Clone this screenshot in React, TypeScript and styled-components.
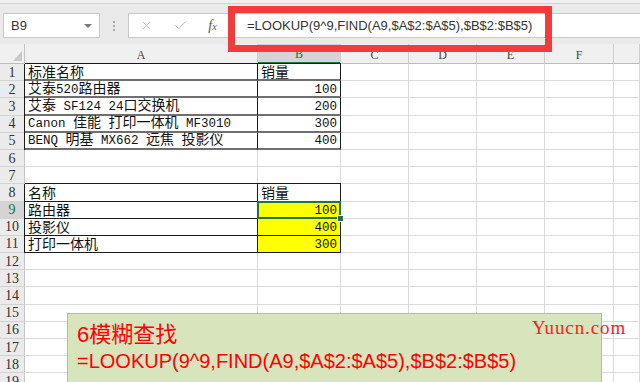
import React from 'react'
import styled, { createGlobalStyle } from 'styled-components'
import { X, Check } from 'lucide-react'

const COLS = '25px 233px 83px 68px 68px 68px 69px 1fr'
const ROW_H = 17.2
const GREEN = '#217346'

const GlobalStyle = createGlobalStyle`
	html, body {
		margin: 0;
		padding: 0;
		background: #fff;
		overflow: hidden;
	}
`

const Window = styled.div`
	position: relative;
	width: 640px;
	height: 382px;
	overflow: hidden;
	background: #f0f0f0;
`

const TopBar = styled.div`
	display: flex;
	align-items: center;
	height: 25px;
	margin-top: 3px;
	border-top: 1px solid #d4d4d4;
	padding: 9px 0 6px 3px;
	background: #eaeaea;
`

const NameBox = styled.div`
	box-sizing: border-box;
	display: flex;
	align-items: center;
	justify-content: space-between;
	width: 97px;
	height: 25px;
	padding: 0 7px 0 7px;
	background: #fff;
	border: 1px solid #c8c8c8;
	font: 13px 'Liberation Sans', sans-serif;
	color: #333;
`

const DropArrow = styled.span`
	width: 0;
	height: 0;
	border-left: 4px solid transparent;
	border-right: 4px solid transparent;
	border-top: 4px solid #7a7a7a;
`

const Grip = styled.div`
	width: 2px;
	height: 10px;
	margin: 0 13px;
	background: repeating-linear-gradient(to bottom, #aaa 0 2px, transparent 2px 4px);
`

const FormulaBox = styled.div`
	box-sizing: border-box;
	flex: 1;
	display: flex;
	align-items: center;
	height: 25px;
	background: #fff;
	border: 1px solid #c8c8c8;
	border-right: none;
`

const Actions = styled.div`
	display: grid;
	grid-template-columns: 34px 34px 31px;
	place-items: center;
	width: 99px;
	color: #b5b5b5;
`

const Fx = styled.span`
	font: italic 14px 'Liberation Serif', serif;
	color: #555;
	& small {
		font-size: 10px;
	}
`

const FormulaText = styled.div`
	padding-left: 19px;
	font: 13px 'Liberation Sans', sans-serif;
	color: #333;
	white-space: nowrap;
`

const Highlight = styled.div`
	position: absolute;
	left: 228px;
	top: 6px;
	width: 324px;
	height: 46px;
	box-sizing: border-box;
	border: 7px solid #f43a3a;
	z-index: 4;
`

const Sheet = styled.div`
	background: #fff;
`

const Row = styled.div<{ $head?: boolean }>`
	display: grid;
	grid-template-columns: ${COLS};
	grid-template-rows: 100%;
	height: ${p => (p.$head ? '20px' : `${ROW_H}px`)};
`

const Corner = styled.div`
	position: relative;
	box-sizing: border-box;
	background: #f0f0f0;
	border-right: 1px solid #c4c4c4;
	border-bottom: 1px solid #bdbdbd;
	&::after {
		content: '';
		position: absolute;
		right: 2px;
		bottom: 2px;
		border-left: 9px solid transparent;
		border-bottom: 10px solid #c9c9c9;
	}
`

const ColHead = styled.div<{ $active?: boolean }>`
	box-sizing: border-box;
	display: flex;
	align-items: flex-end;
	justify-content: center;
	padding-bottom: 1px;
	background: ${p => (p.$active ? '#d4d4d4' : '#f0f0f0')};
	border-right: 1px solid #cfcfcf;
	border-bottom: ${p => (p.$active ? `2px solid ${GREEN}` : '1px solid #bdbdbd')};
	font: 12px 'Liberation Serif', serif;
	color: ${p => (p.$active ? GREEN : '#444')};
	line-height: 14px;
`

const RowHead = styled.div<{ $active?: boolean }>`
	box-sizing: border-box;
	display: flex;
	align-items: center;
	justify-content: center;
	min-height: 0;
	background: ${p => (p.$active ? '#d4d4d4' : '#ebebeb')};
	border-right: 1px solid #c4c4c4;
	border-bottom: 1px solid #d2d2d2;
	font: 14px 'Liberation Serif', serif;
	line-height: 15px;
	color: ${p => (p.$active ? GREEN : '#333')};
`

type Box = 'soft' | 'hard'

const Cell = styled.div<{
	$box?: Box
	$top?: boolean
	$left?: boolean
	$right?: boolean
	$fill?: boolean
	$selected?: boolean
}>`
	position: relative;
	box-sizing: border-box;
	display: flex;
	align-items: center;
	justify-content: ${p => (p.$right ? 'flex-end' : 'flex-start')};
	min-height: 0;
	padding: 0 3px;
	white-space: pre;
	background: ${p => (p.$fill ? '#ffff00' : '#fff')};
	border-right: 1px solid ${p => (p.$box ? '#1a1a1a' : '#dadada')};
	border-bottom: ${p =>
		p.$box === 'soft'
			? '2px solid #6f6f6f'
			: p.$box === 'hard'
			? '1px solid #1a1a1a'
			: '1px solid #dadada'};
	box-shadow: ${p =>
		[p.$top && '0 -1px 0 #1a1a1a', p.$left && '-1px 0 0 #1a1a1a']
			.filter(Boolean)
			.join(', ') || 'none'};
	font: 14px 'Noto Sans CJK SC', monospace;
	line-height: 15px;
	color: #111;
	z-index: ${p => (p.$selected ? 2 : 'auto')};
	&::after {
		content: '';
		display: ${p => (p.$selected ? 'block' : 'none')};
		position: absolute;
		left: -1px;
		top: -1px;
		right: -1px;
		bottom: -1px;
		border: 2px solid ${GREEN};
	}
	&::before {
		content: '';
		display: ${p => (p.$selected ? 'block' : 'none')};
		position: absolute;
		right: -4px;
		bottom: -4px;
		width: 5px;
		height: 5px;
		background: ${GREEN};
		border: 1px solid #fff;
		z-index: 3;
	}
`

// ascii runs use a narrower mono face, like the half-width glyphs in the sheet
const Latin = styled.span`
	font: 12.5px 'Liberation Mono', monospace;
	line-height: 15px;
`

const Note = styled.div`
	position: absolute;
	left: 67px;
	top: 313px;
	width: 535px;
	height: 90px;
	box-sizing: border-box;
	padding: 8px 0 0 9px;
	background: #d8e4bc;
	border: 1px solid #b4b8ad;
	color: #ff0000;
	z-index: 5;
`

const NoteLine = styled.div<{ $size: number }>`
	height: 26px;
	line-height: 26px;
	font-size: ${p => p.$size}px;
	font-family: 'Liberation Sans', 'Noto Sans CJK SC', sans-serif;
	white-space: nowrap;
`

const Watermark = styled.div`
	position: absolute;
	left: 532px;
	top: 317px;
	line-height: 20px;
	font: 19px 'Liberation Serif', serif;
	letter-spacing: 0.9px;
	color: #ff1a1a;
	z-index: 6;
`

type RowData = {
	a?: string
	b?: string
	box?: Box
	first?: boolean
	fill?: boolean
	selected?: boolean
}

const rows: RowData[] = [
	{ a: '标准名称', b: '销量', box: 'soft', first: true },
	{ a: '艾泰520路由器', b: '100', box: 'soft' },
	{ a: '艾泰 SF124 24口交换机', b: '200', box: 'soft' },
	{ a: 'Canon 佳能 打印一体机 MF3010', b: '300', box: 'soft' },
	{ a: 'BENQ 明基 MX662 远焦 投影仪', b: '400', box: 'soft' },
	{},
	{},
	{ a: '名称', b: '销量', box: 'hard', first: true },
	{ a: '路由器', b: '100', box: 'hard', fill: true, selected: true },
	{ a: '投影仪', b: '400', box: 'hard', fill: true },
	{ a: '打印一体机', b: '300', box: 'hard', fill: true },
	{},
	{},
	{},
	{},
	{},
	{},
	{},
	{}
]

const letters = ['A', 'B', 'C', 'D', 'E', 'F', '']
const formula = '=LOOKUP(9^9,FIND(A9,$A$2:$A$5),$B$2:$B$5)'

function CellText({ text }: { text?: string }) {
	if (!text) return null
	const parts = text.match(/[\x20-\x7e]+|[^\x20-\x7e]+/g) ?? []
	return (
		<span>
			{parts.map((p, i) =>
				/^[\x20-\x7e]+$/.test(p) ? <Latin key={i}>{p}</Latin> : <span key={i}>{p}</span>
			)}
		</span>
	)
}

export default function App() {
	return (
		<Window>
			<GlobalStyle />
			<TopBar>
				<NameBox>
					B9
					<DropArrow />
				</NameBox>
				<Grip />
				<FormulaBox>
					<Actions>
						<X size={13} strokeWidth={1.6} />
						<Check size={15} strokeWidth={1.6} />
						<Fx>
							f<small>x</small>
						</Fx>
					</Actions>
					<FormulaText>{formula}</FormulaText>
				</FormulaBox>
			</TopBar>
			<Highlight />
			<Sheet>
				<Row $head>
					<Corner />
					{letters.map((l, i) => (
						<ColHead key={i} $active={l === 'B'}>
							{l}
						</ColHead>
					))}
				</Row>
				{rows.map((r, i) => {
					const isNumber = r.b !== undefined && /^\d+$/.test(r.b)
					return (
						<Row key={i}>
							<RowHead $active={i === 8}>{i + 1}</RowHead>
							<Cell $box={r.box} $top={r.first} $left={!!r.box}>
								<CellText text={r.a} />
							</Cell>
							<Cell
								$box={r.box}
								$top={r.first}
								$right={isNumber}
								$fill={r.fill}
								$selected={r.selected}
							>
								<CellText text={r.b} />
							</Cell>
							<Cell />
							<Cell />
							<Cell />
							<Cell />
							<Cell />
						</Row>
					)
				})}
			</Sheet>
			<Note>
				<NoteLine $size={22}>6模糊查找</NoteLine>
				<NoteLine $size={20}>{formula}</NoteLine>
			</Note>
			<Watermark>Yuucn.com</Watermark>
		</Window>
	)
}
